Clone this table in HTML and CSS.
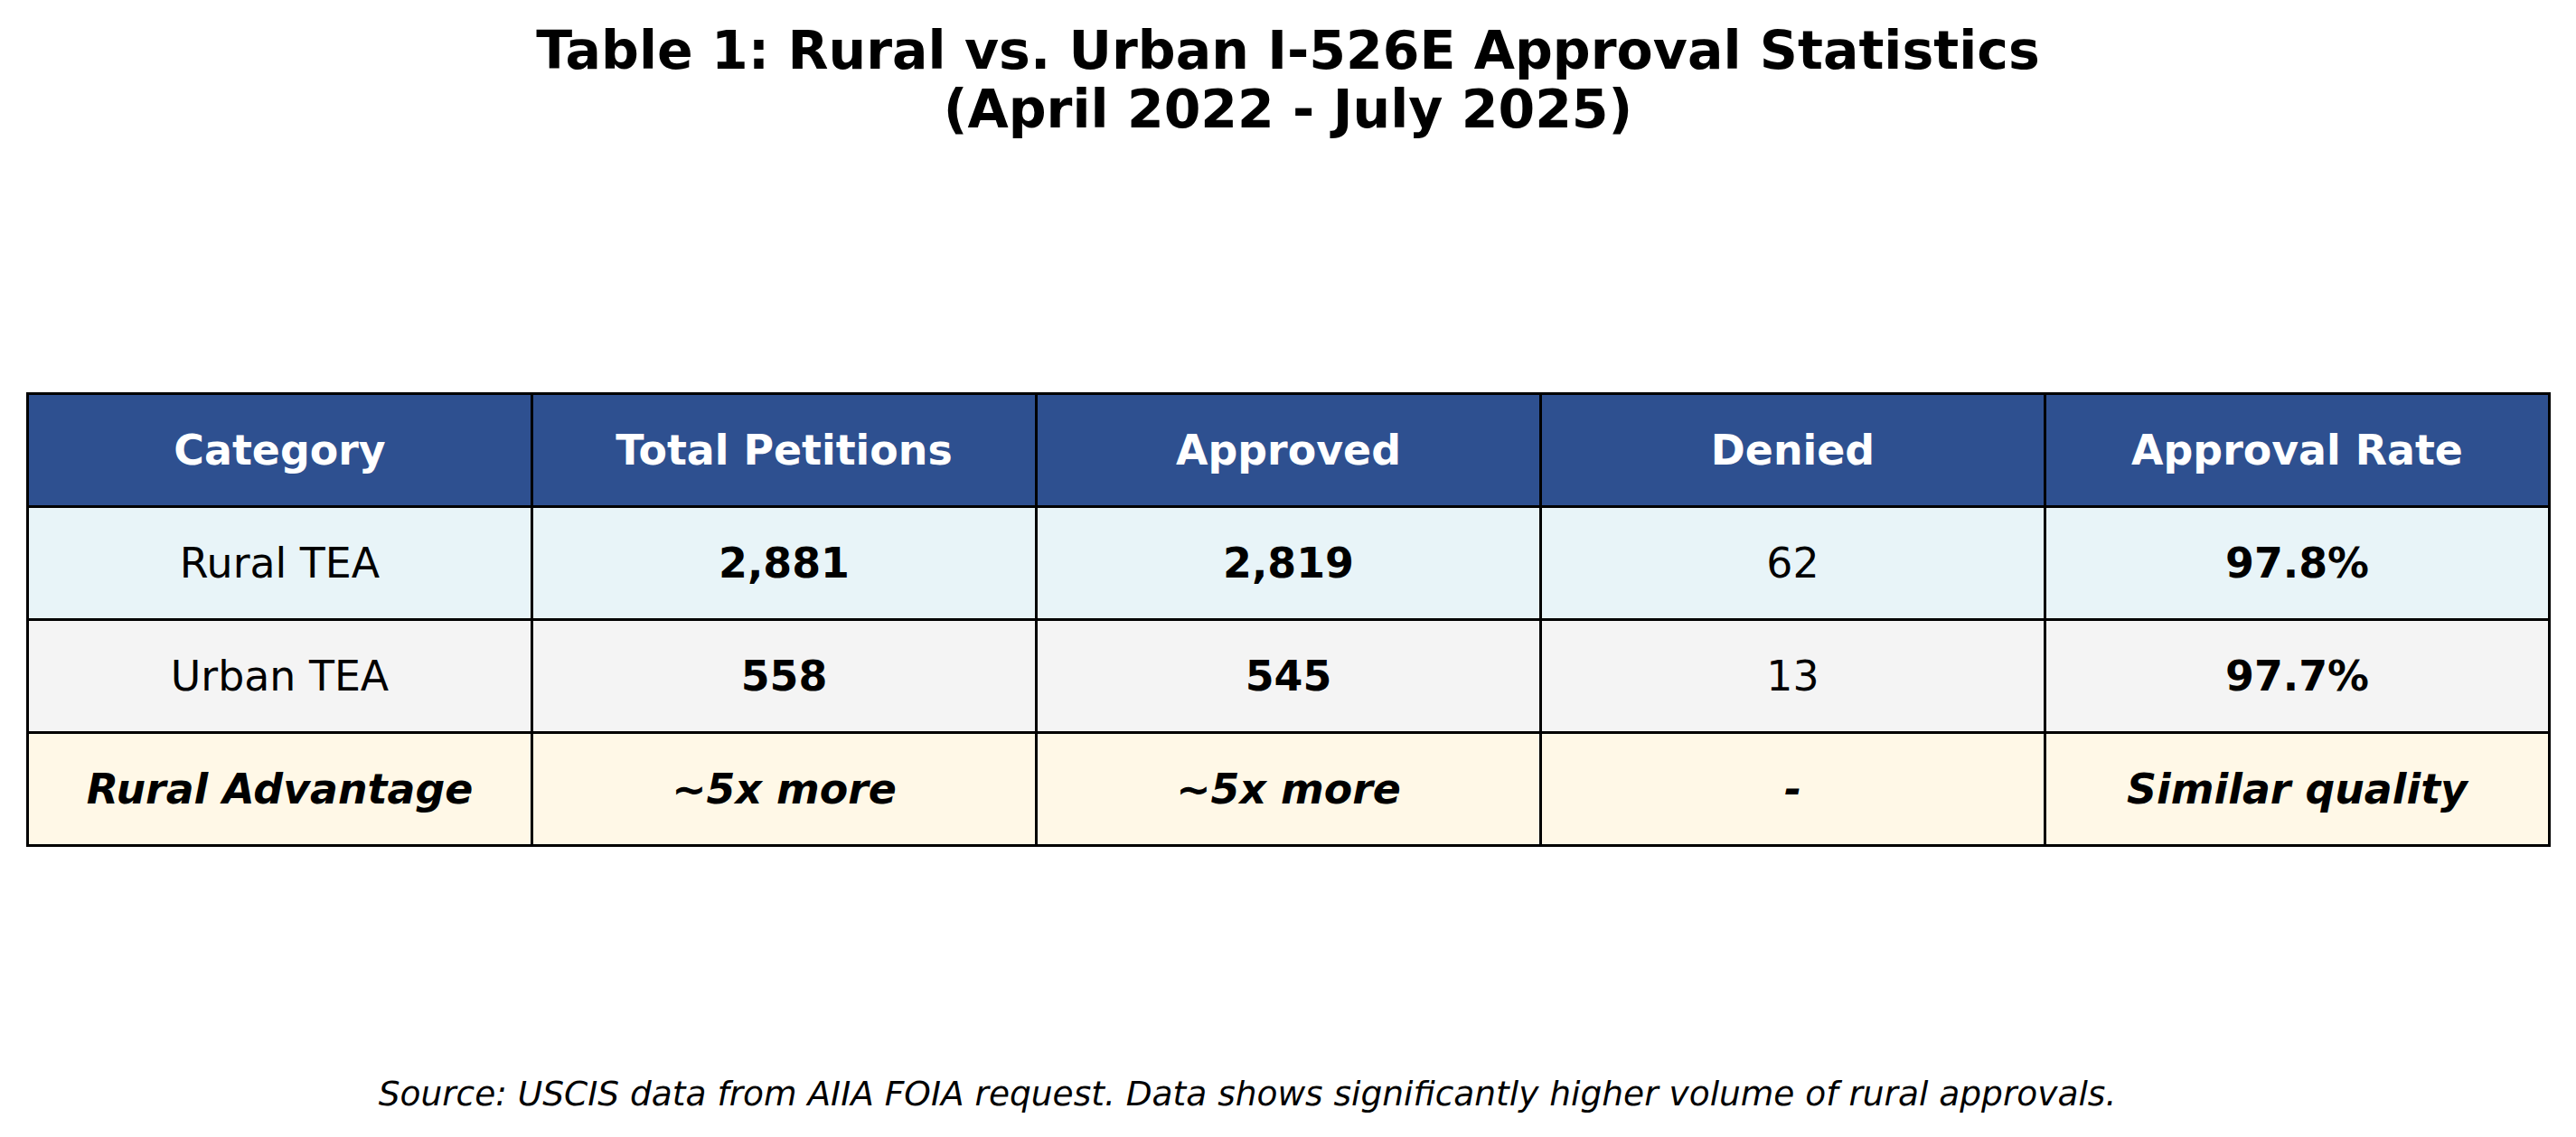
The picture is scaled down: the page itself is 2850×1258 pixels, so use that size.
FILE: index.html
```html
<!DOCTYPE html>
<html>
<head>
<meta charset="utf-8">
<link rel="stylesheet" href="styles.css">
</head>
<body>
<div class="figure">
  <h1 class="title">Table 1: Rural vs. Urban I-526E Approval Statistics<br>(April 2022 - July 2025)</h1>
  <div class="grid">
    <div class="cell head">Category</div>
    <div class="cell head">Total Petitions</div>
    <div class="cell head">Approved</div>
    <div class="cell head">Denied</div>
    <div class="cell head">Approval Rate</div>

    <div class="cell rural">Rural TEA</div>
    <div class="cell rural b">2,881</div>
    <div class="cell rural b">2,819</div>
    <div class="cell rural">62</div>
    <div class="cell rural b">97.8%</div>

    <div class="cell urban">Urban TEA</div>
    <div class="cell urban b">558</div>
    <div class="cell urban b">545</div>
    <div class="cell urban">13</div>
    <div class="cell urban b">97.7%</div>

    <div class="cell adv bi">Rural Advantage</div>
    <div class="cell adv bi">~5x more</div>
    <div class="cell adv bi">~5x more</div>
    <div class="cell adv bi">-</div>
    <div class="cell adv bi">Similar quality</div>
  </div>
  <p class="source">Source: USCIS data from AIIA FOIA request. Data shows significantly higher volume of rural approvals.</p>
</div>
</body>
</html>
```
FILE: styles.css
```css
html, body {
  margin: 0;
  padding: 0;
  background: #ffffff;
}
.figure {
  width: 2850px;
  height: 1258px;
  display: flex;
  flex-direction: column;
  align-items: flex-start;
  font-family: "DejaVu Sans", "Liberation Sans", sans-serif;
  color: #000000;
}
.title {
  margin: 24px 0 0 0;
  width: 2850px;
  text-align: center;
  font-size: 58.5px;
  line-height: 65px;
  font-weight: bold;
}
.grid {
  margin: 280px 0 0 29px;
  display: grid;
  grid-template-columns: repeat(5, 555px);
  grid-template-rows: repeat(4, 122px);
  gap: 3px;
  padding: 3px;
  background: #000000;
}
.cell {
  display: flex;
  align-items: center;
  justify-content: center;
  font-size: 45.83px;
  white-space: nowrap;
}
.head {
  background: #2E5090;
  color: #ffffff;
  font-weight: bold;
}
.rural { background: #E8F4F8; }
.urban { background: #F4F4F4; }
.adv { background: #FFF8E7; }
.b { font-weight: bold; }
.bi { font-weight: bold; font-style: italic; }
.source {
  margin: 251px 0 0 0;
  width: 2760px;
  text-align: center;
  font-size: 37.5px;
  line-height: 45px;
  font-style: italic;
}
```
